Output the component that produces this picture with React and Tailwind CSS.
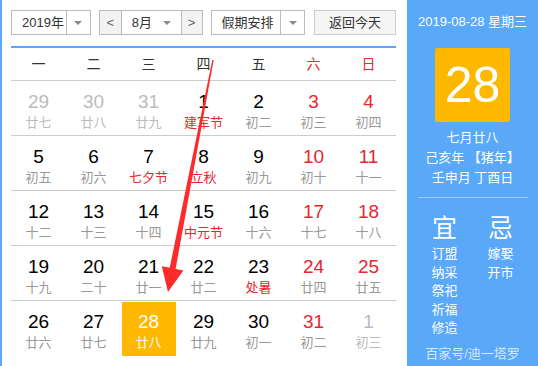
import React from 'react';

const weekdays = ['一', '二', '三', '四', '五', '六', '日'];

// n: day, l: lunar, o: other month, r: red number, h: red lunar (festival), s: selected
const rows = [
  [
    { n: 29, l: '廿七', o: true }, { n: 30, l: '廿八', o: true }, { n: 31, l: '廿九', o: true },
    { n: 1, l: '建军节', h: true }, { n: 2, l: '初二' }, { n: 3, l: '初三', r: true }, { n: 4, l: '初四', r: true },
  ],
  [
    { n: 5, l: '初五' }, { n: 6, l: '初六' }, { n: 7, l: '七夕节', h: true }, { n: 8, l: '立秋', h: true },
    { n: 9, l: '初九' }, { n: 10, l: '初十', r: true }, { n: 11, l: '十一', r: true },
  ],
  [
    { n: 12, l: '十二' }, { n: 13, l: '十三' }, { n: 14, l: '十四' }, { n: 15, l: '中元节', h: true },
    { n: 16, l: '十六' }, { n: 17, l: '十七', r: true }, { n: 18, l: '十八', r: true },
  ],
  [
    { n: 19, l: '十九' }, { n: 20, l: '二十' }, { n: 21, l: '廿一' }, { n: 22, l: '廿二' },
    { n: 23, l: '处暑', h: true }, { n: 24, l: '廿四', r: true }, { n: 25, l: '廿五', r: true },
  ],
  [
    { n: 26, l: '廿六' }, { n: 27, l: '廿七' }, { n: 28, l: '廿八', s: true }, { n: 29, l: '廿九' },
    { n: 30, l: '初一' }, { n: 31, l: '初二', r: true }, { n: 1, l: '初三', o: true },
  ],
];

function Caret() {
  return <span className="block w-0 h-0 border-x-[4px] border-x-transparent border-t-[4px] border-t-[#888]" />;
}

function DayCell({ d }) {
  if (d.s) {
    return (
      <div className="flex items-center justify-center">
        <div className="w-[54px] h-[54px] bg-[#ffb800] flex flex-col items-center pt-[10px] text-white">
          <span className="text-[19px] leading-[20px]">{d.n}</span>
          <span className="text-[13px] leading-[16px] mt-[3px]">{d.l}</span>
        </div>
      </div>
    );
  }
  const num = d.o ? 'text-[#bbb]' : d.r ? 'text-[#e8262d]' : 'text-black';
  const lun = d.o ? 'text-[#bbb]' : d.h ? 'text-[#e8262d]' : 'text-[#999]';
  return (
    <div className="flex flex-col items-center pt-[11px]">
      <span className={`text-[19px] leading-[20px] ${num}`}>{d.n}</span>
      <span className={`text-[13px] leading-[16px] mt-[3px] ${lun}`}>{d.l}</span>
    </div>
  );
}

export default function App() {
  return (
    <div
      className="relative flex w-[538px] h-[366px] overflow-hidden bg-white"
      style={{ fontFamily: '"Liberation Sans", "Noto Sans CJK SC", sans-serif' }}
    >
      {/* Calendar */}
      <div className="w-[407px] border-l-2 border-[#5aa8f8] pl-[9px] pr-[11px]">
        <div className="flex items-center pt-[10px] h-[35px] text-[13px] text-[#333] whitespace-nowrap">
          <div className="flex w-[80px] h-[25px] border border-[#bbb]">
            <span className="flex-1 flex items-center pl-[10px]">2019年</span>
            <span className="w-[24px] flex items-center justify-center border-l border-[#bbb]"><Caret /></span>
          </div>
          <div className="flex ml-[8px] w-[104px] h-[25px] border border-[#bbb]">
            <span className="w-[22px] flex items-center justify-center bg-[#f3f3f3] border-r border-[#bbb] text-[#666]">&lt;</span>
            <span className="flex-1 flex items-center justify-between pl-[10px] pr-[10px]">8月<Caret /></span>
            <span className="w-[21px] flex items-center justify-center bg-[#f3f3f3] border-l border-[#bbb] text-[#666]">&gt;</span>
          </div>
          <div className="flex ml-[8px] w-[95px] h-[25px] border border-[#bbb]">
            <span className="flex-1 flex items-center pl-[10px]">假期安排</span>
            <span className="w-[24px] flex items-center justify-center border-l border-[#bbb]"><Caret /></span>
          </div>
          <div className="ml-[9px] w-[82px] h-[25px] border border-[#ccc] bg-[#f5f5f5] flex items-center justify-center">
            返回今天
          </div>
        </div>
        <div className="mt-[11px] h-[2px] bg-[#5aa8f8]" />
        <div className="grid grid-cols-7 h-[33px] items-center border-b border-[#ccc] text-[14px]">
          {weekdays.map((w, i) => (
            <span key={w} className={`text-center ${i > 4 ? 'text-[#e8262d]' : 'text-[#333]'}`}>{w}</span>
          ))}
        </div>
        {rows.map((row, i) => (
          <div key={i} className={`grid grid-cols-7 h-[55px] ${i < 4 ? 'border-b border-[#ccc]' : ''}`}>
            {row.map((d, j) => <DayCell key={j} d={d} />)}
          </div>
        ))}
      </div>

      {/* Right panel */}
      <div className="w-[131px] bg-[#5aa8f8] flex flex-col items-center text-white">
        <div className="pt-[13px] text-[13px] leading-[18px]">2019-08-28 星期三</div>
        <div className="mt-[17px] w-[75px] h-[74px] bg-[#ffb800] rounded-[2px] flex items-center justify-center text-[50px] leading-none">
          28
        </div>
        <div className="mt-[6px] text-[13px] leading-[20px] text-center">
          <div>七月廿八</div>
          <div>己亥年 【猪年】</div>
          <div>壬申月 丁酉日</div>
        </div>
        <div className="mt-[9px] w-[110px] h-px bg-[#9ccbfb]" />
        <div className="flex gap-[30px] mt-[16px]">
          <div className="flex flex-col items-center w-[26px]">
            <span className="text-[25px] leading-[28px]">宜</span>
            <div className="mt-[3px] text-[13px] leading-[18.5px] flex flex-col items-center">
              <span>订盟</span><span>纳采</span><span>祭祀</span><span>祈福</span><span>修造</span>
            </div>
          </div>
          <div className="flex flex-col items-center w-[26px]">
            <span className="text-[25px] leading-[28px]">忌</span>
            <div className="mt-[3px] text-[13px] leading-[18.5px] flex flex-col items-center">
              <span>嫁娶</span><span>开市</span>
            </div>
          </div>
        </div>
        <div className="mt-[6px] text-[13px] text-white/75">百家号/迪一塔罗</div>
      </div>

      {/* Annotation arrow */}
      <svg className="absolute inset-0 pointer-events-none" width="538" height="366">
        <polygon
          fill="#ff2b2b"
          points="212.3,59.9 213.7,60.1 175.6,269 183.4,270.5 168,292 161.8,266.3 169.7,267.8"
        />
      </svg>
    </div>
  );
}
